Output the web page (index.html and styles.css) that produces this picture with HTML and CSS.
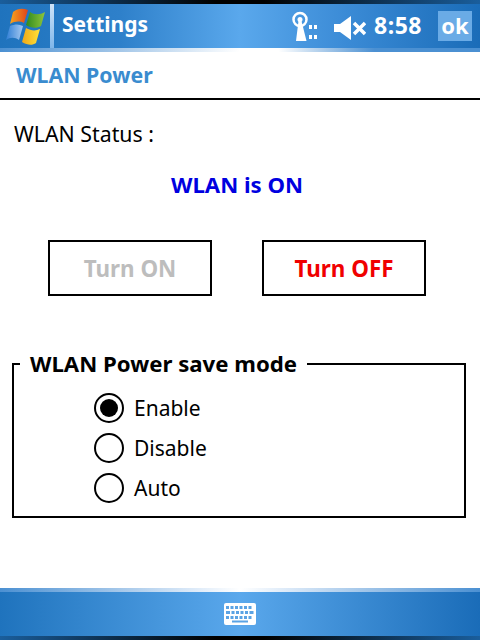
FILE: index.html
```html
<!DOCTYPE html>
<html lang="en">
<head>
  <meta charset="UTF-8">
  <meta name="viewport" content="width=device-width, initial-scale=1.0">
  <title>WLAN Power</title>
  <link rel="stylesheet" href="styles.css">
</head>
<body>
  <div class="phone">
    <header class="title-bar">
      <svg class="start-logo" viewBox="0 0 40 40" width="40" height="40">
        <defs>
          <linearGradient id="flagRed" x1="0" y1="0" x2="1" y2="0">
            <stop offset="0" stop-color="#f7a51e"/><stop offset="1" stop-color="#e0431c"/>
          </linearGradient>
          <linearGradient id="flagGreen" x1="0" y1="0" x2="1" y2="0">
            <stop offset="0" stop-color="#2f8a1f"/><stop offset="1" stop-color="#8fc63c"/>
          </linearGradient>
          <linearGradient id="flagBlue" x1="0" y1="0" x2="1" y2="0">
            <stop offset="0" stop-color="#2f7fd6"/><stop offset="1" stop-color="#a5c8f0"/>
          </linearGradient>
          <linearGradient id="flagYellow" x1="0" y1="0" x2="1" y2="0">
            <stop offset="0" stop-color="#f0a818"/><stop offset="1" stop-color="#ffe23a"/>
          </linearGradient>
        </defs>
        <path d="M7 6 C12 2 17 2 22 4 L18 17 C14 15 9 15 4 18 Z" fill="url(#flagRed)"/>
        <path d="M24 6 C28 9 34 9 39 6 L35 20 C30 23 25 22 20 19 Z" fill="url(#flagGreen)"/>
        <path d="M4 20 C9 18 13 18 17 20 L13 34 C9 31 4 31 0 34 Z" fill="url(#flagBlue)"/>
        <path d="M20 22 C25 25 30 25 34 23 L30 37 C26 40 21 39 16 36 Z" fill="url(#flagYellow)"/>
      </svg>
      <span class="title-divider"></span>
      <span class="title-text">Settings</span>
      <div class="tray">
        <svg class="tray-antenna" viewBox="0 0 26 30" width="26" height="30">
          <circle cx="8" cy="8.500" r="6.500" fill="none" stroke="#fff" stroke-width="2.500"/>
          <circle cx="8" cy="8.500" r="2.500" fill="#fff"/>
          <path d="M6.500 10 H9.500 L14.500 30 H4 Z" fill="#fff"/>
          <path d="M17 14 h3 v4 h-3 z M22 14 h3 v4 h-3 z M17 24 h3 v4 h-3 z M22 24 h3 v4 h-3 z" fill="#fff"/>
        </svg>
        <svg class="tray-sound" viewBox="0 0 32 24" width="32" height="24">
          <path d="M0 8 H6 L17 0 V24 L6 16 H0 Z" fill="#fff"/>
          <path d="M20 7 L31 18 M31 7 L20 18" stroke="#fff" stroke-width="3.500" fill="none"/>
        </svg>
        <span class="clock">8:58</span>
        <span class="ok-button">ok</span>
      </div>
    </header>
    <div class="bar-fade"></div>

    <h1 class="page-title">WLAN Power</h1>

    <main class="content">
      <p class="status-label">WLAN Status :</p>
      <p class="status-value">WLAN is ON</p>

      <div class="power-buttons">
        <button class="power-btn power-btn-off" disabled>Turn ON</button>
        <button class="power-btn power-btn-on">Turn OFF</button>
      </div>

      <fieldset class="save-mode">
        <legend>WLAN Power save mode</legend>
        <div class="radio-list">
          <label class="radio-row"><span class="radio radio-checked"></span>Enable</label>
          <label class="radio-row"><span class="radio"></span>Disable</label>
          <label class="radio-row"><span class="radio"></span>Auto</label>
        </div>
      </fieldset>
    </main>

    <footer class="menu-bar">
      <div class="bar-fade bar-fade-bottom"></div>
      <div class="menu-body">
        <svg viewBox="0 0 32 22" width="32" height="22">
          <rect x="0" y="0" width="32" height="22" rx="2" fill="#fff"/>
          <path d="M2 3 h3 v3 h-3 z M6.500 3 h3 v3 h-3 z M11 3 h3 v3 h-3 z M15.500 3 h3 v3 h-3 z M20 3 h3 v3 h-3 z M24.500 3 h3 v3 h-3 z M2 8 h4 v3 h-4 z M7.500 8 h3 v3 h-3 z M12 8 h3 v3 h-3 z M16.500 8 h3 v3 h-3 z M21 8 h3 v3 h-3 z M25.500 8 h4 v3 h-4 z M2 13 h3 v3 h-3 z M6.500 13 h3 v3 h-3 z M11 13 h3 v3 h-3 z M15.500 13 h3 v3 h-3 z M20 13 h3 v3 h-3 z M24.500 13 h3 v3 h-3 z M8 17.500 h16 v2 h-16 z" fill="#5ba3e4"/>
        </svg>
      </div>
      <div class="edge-strip"></div>
    </footer>
  </div>
</body>
</html>
```

FILE: styles.css
```css
html, body {
  margin: 0;
  padding: 0;
}

body {
  font-family: "Noto Sans", "DejaVu Sans", sans-serif;
  color: #000;
  background: #fff;
}

.phone {
  width: 480px;
  height: 640px;
  display: flex;
  flex-direction: column;
  overflow: hidden;
}

.edge-strip {
  height: 4px;
  background: linear-gradient(to right, #1a5e9c 0%, #000 45%, #000 55%, #1a5e9c 100%);
}

.title-bar {
  height: 48px;
  box-sizing: border-box;
  padding-top: 4px;
  display: flex;
  align-items: center;
  background:
    linear-gradient(to right, #1a5e9c 0%, #000 45%, #000 55%, #1a5e9c 100%) top / 100% 4px no-repeat,
    linear-gradient(to right, #1f73bd 0%, #2e80ca 25%, #5aa8ec 50%, #3b8bd6 72%, #1a6cb8 100%);
  color: #fff;
}

.start-logo {
  margin-left: 6px;
  flex: none;
}

.title-divider {
  width: 4px;
  height: 44px;
  margin-left: 4px;
  background: linear-gradient(to bottom, #cfe4f8, #7fb6ea);
}

.title-text {
  margin: 0 0 4px 8px;
  font-size: 21px;
  font-weight: bold;
}

.tray {
  margin-left: auto;
  display: flex;
  align-items: center;
}

.tray-sound {
  margin-left: 16px;
  margin-top: 4px;
}

.clock {
  font-size: 23px;
  font-weight: bold;
  letter-spacing: 0.5px;
  margin: 0 16px 2px 8px;
}

.ok-button {
  width: 34px;
  height: 30px;
  line-height: 28px;
  text-align: center;
  font-size: 22px;
  font-weight: bold;
  background: #6aabe6;
  margin-right: 8px;
}

.bar-fade {
  height: 4px;
  background: linear-gradient(to right, #4b90d2 0%, #ffffff 50%, #ffffff 58%, #4b90d2 78%);
}

.page-title {
  margin: 0;
  height: 46px;
  line-height: 46px;
  padding-left: 16px;
  font-size: 21.300px;
  font-weight: bold;
  color: #3a8ccf;
  border-bottom: 2px solid #000;
}

.content {
  flex: 1;
  padding: 0 14px 0 12px;
}

.status-label {
  margin: 22px 0 0 2px;
  line-height: 24px;
  font-size: 21.300px;
}

.status-value {
  margin: 27px 0 0;
  padding-right: 4px;
  line-height: 24px;
  text-align: center;
  font-size: 22.200px;
  font-weight: bold;
  color: #0000e0;
}

.power-buttons {
  display: flex;
  gap: 50px;
  margin: 43px 0 0 36px;
}

.power-btn {
  width: 164px;
  height: 56px;
  padding: 0;
  background: #fff;
  border: 2px solid #000;
  border-radius: 0;
  font-family: inherit;
  font-size: 22.400px;
  font-weight: bold;
}

.power-btn-off {
  color: #bdbdbd;
}

.power-btn-on {
  color: #f00000;
}

.save-mode {
  margin: 55px 0 0;
  padding: 0;
  border: 2px solid #000;
}

.save-mode legend {
  margin-left: 6px;
  padding: 0 10px;
  line-height: 26px;
  font-size: 22.200px;
  font-weight: bold;
}

.radio-list {
  padding: 11px 0 8px 80px;
}

.radio-row {
  display: flex;
  align-items: center;
  height: 40px;
  gap: 10px;
  font-size: 21px;
}

.radio {
  width: 30px;
  height: 30px;
  box-sizing: border-box;
  border: 2px solid #000;
  border-radius: 50%;
  background: #fff;
  display: flex;
  align-items: center;
  justify-content: center;
}

.radio-checked::after {
  content: "";
  width: 18px;
  height: 18px;
  border-radius: 50%;
  background: #000;
}

.menu-bar {
  height: 52px;
}

.bar-fade-bottom {
  height: 4px;
  background: linear-gradient(to right, #4b90d2 0%, #dbe9f8 40%, #ffffff 50%, #dbe9f8 60%, #4b90d2 100%);
}

.menu-body {
  height: 44px;
  display: flex;
  align-items: center;
  justify-content: center;
  background: linear-gradient(to right, #1f73bd 0%, #5aa8ec 50%, #1a6cb8 100%);
}
```
